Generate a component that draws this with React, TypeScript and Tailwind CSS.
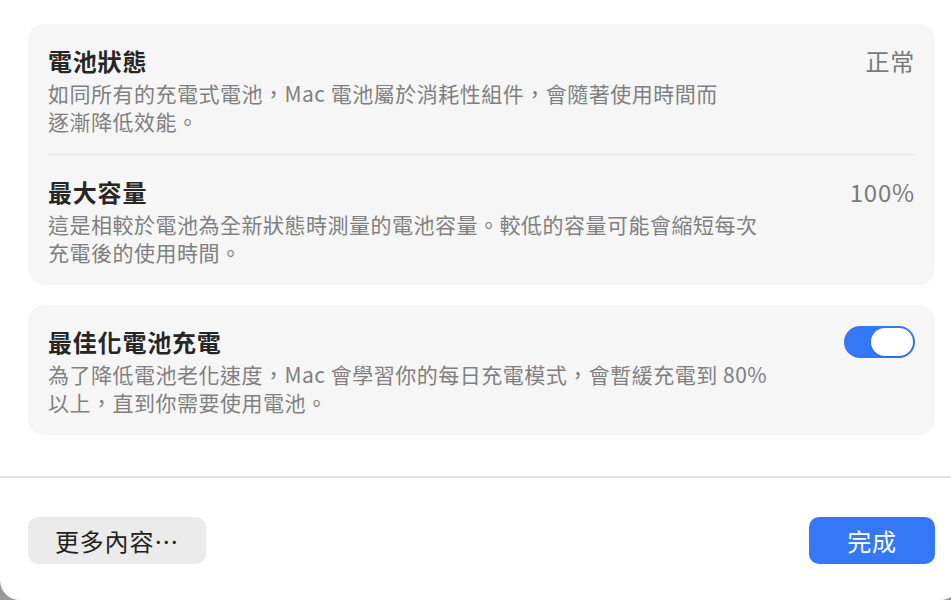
import React from "react";

const font = { fontFamily: '"Noto Sans CJK TC", "Noto Sans", sans-serif' };

function Row({
  title,
  lines,
  right,
}: {
  title: string;
  lines: string[];
  right: React.ReactNode;
}) {
  return (
    <div className="flex justify-between px-[20px] pt-[22px] pb-[19px]">
      <div className="flex flex-col">
        <div className="text-[24px] leading-[30px] font-semibold tracking-[0.8px] text-[#262626] whitespace-nowrap">
          {title}
        </div>
        <div className="mt-[3px] text-[21px] leading-[28px] tracking-[0.5px] text-[#808080] whitespace-nowrap">
          {lines.map((l, i) => (
            <div key={i}>{l}</div>
          ))}
        </div>
      </div>
      <div>{right}</div>
    </div>
  );
}

function Value({ children }: { children: React.ReactNode }) {
  return (
    <div className="text-[24px] leading-[30px] tracking-[0.8px] text-[#7a7a7a] whitespace-nowrap">
      {children}
    </div>
  );
}

function Toggle() {
  return (
    <div className="mt-[-1px] w-[71px] h-[32px] rounded-full bg-[#3478f6] flex items-center justify-end pr-[2px]">
      <div className="w-[42px] h-[28px] rounded-full bg-white shadow-[0_1px_2px_rgba(0,0,0,0.15)]" />
    </div>
  );
}

export default function App() {
  return (
    <div className="h-[600px] w-full overflow-hidden bg-[#9a9a9a]" style={font}>
      <div className="h-[600px] w-[960px] bg-white rounded-bl-[20px] rounded-br-[20px] flex flex-col">
        <div className="pl-[28px] pr-[25px] pt-[24px]">
          <div className="rounded-[16px] bg-[#f6f6f6]">
            <Row
              title="電池狀態"
              lines={[
                "如同所有的充電式電池，Mac 電池屬於消耗性組件，會隨著使用時間而",
                "逐漸降低效能。",
              ]}
              right={<Value>正常</Value>}
            />
            <div className="mx-[20px] h-px bg-[#e4e4e4]" />
            <Row
              title="最大容量"
              lines={[
                "這是相較於電池為全新狀態時測量的電池容量。較低的容量可能會縮短每次",
                "充電後的使用時間。",
              ]}
              right={<Value>100%</Value>}
            />
          </div>
          <div className="mt-[20px] rounded-[16px] bg-[#f6f6f6]">
            <Row
              title="最佳化電池充電"
              lines={[
                "為了降低電池老化速度，Mac 會學習你的每日充電模式，會暫緩充電到 80%",
                "以上，直到你需要使用電池。",
              ]}
              right={<Toggle />}
            />
          </div>
        </div>
        <div className="mt-[41px] h-[2px] bg-[#e3e3e3]" />
        <div className="pl-[28px] pr-[25px] pt-[39px] flex justify-between">
          <button className="w-[178px] h-[47px] rounded-[10px] bg-[#ebebeb] text-[24px] tracking-[0.8px] text-[#222222] flex items-center justify-center">
            更多內容⋯
          </button>
          <button className="w-[126px] h-[47px] rounded-[10px] bg-[#3478f6] text-[24px] tracking-[0.8px] text-white flex items-center justify-center">
            完成
          </button>
        </div>
      </div>
    </div>
  );
}
